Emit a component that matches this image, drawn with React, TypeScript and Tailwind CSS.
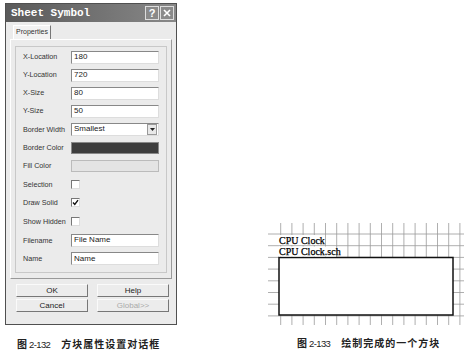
import React from "react";

const rows: { label: string; kind: "input" | "select" | "dark" | "light" | "check"; value?: string; checked?: boolean; h: number }[] = [
  { label: "X-Location", kind: "input", value: "180", h: 18 },
  { label: "Y-Location", kind: "input", value: "720", h: 18 },
  { label: "X-Size", kind: "input", value: "80", h: 18 },
  { label: "Y-Size", kind: "input", value: "50", h: 18 },
  { label: "Border Width", kind: "select", value: "Smallest", h: 18.5 },
  { label: "Border Color", kind: "dark", h: 18.5 },
  { label: "Fill Color", kind: "light", h: 18 },
  { label: "Selection", kind: "check", h: 18.5 },
  { label: "Draw Solid", kind: "check", checked: true, h: 18.5 },
  { label: "Show Hidden", kind: "check", h: 19 },
  { label: "Filename", kind: "input", value: "File Name", h: 18.5 },
  { label: "Name", kind: "input", value: "Name", h: 18.5 },
];

const Field = ({ row }: { row: (typeof rows)[number] }) => {
  if (row.kind === "check")
    return (
      <div className="w-[9px] h-[9px] bg-white border border-t-[#777] border-l-[#777] border-b-[#ddd] border-r-[#ddd] flex items-center justify-center">
        {row.checked && (
          <svg width="7" height="7" viewBox="0 0 7 7">
            <path d="M1 3.5 L2.8 5.5 L6 1.2" stroke="#111" strokeWidth="1.4" fill="none" />
          </svg>
        )}
      </div>
    );
  if (row.kind === "dark")
    return <div className="w-[88px] h-[12px] bg-[#3d3d3d] border border-[#888]" />;
  if (row.kind === "light")
    return <div className="w-[88px] h-[12px] bg-[#e4e4e4] border border-[#bbb]" />;
  return (
    <div className="w-[88px] h-[13px] bg-white border border-t-[#888] border-l-[#888] border-b-[#ddd] border-r-[#ddd] flex items-center justify-between">
      <span className="pl-[2px] text-[8px] leading-none text-[#222]">{row.value}</span>
      {row.kind === "select" && (
        <div className="w-[10px] h-[11px] bg-[#e8e8e8] border border-[#999] flex items-center justify-center mr-[1px]">
          <svg width="5" height="3" viewBox="0 0 5 3">
            <path d="M0 0 H5 L2.5 3 Z" fill="#222" />
          </svg>
        </div>
      )}
    </div>
  );
};

const Btn = ({ children, disabled }: { children: React.ReactNode; disabled?: boolean }) => (
  <div
    className={`w-[72px] h-[13px] flex items-center justify-center text-[8px] leading-none border border-t-[#fafafa] border-l-[#fafafa] border-b-[#777] border-r-[#777] bg-[#ececec] ${
      disabled ? "text-[#aaa]" : "text-[#222]"
    }`}
  >
    {children}
  </div>
);

const Dialog = () => (
  <div className="w-[172px] h-[322px] border border-[#505050] bg-[#ebebeb] flex flex-col font-['Liberation_Sans',sans-serif]">
    <div className="h-[18px] bg-gradient-to-r from-[#5a5a5a] to-[#888] flex items-center justify-between pl-[5px] pr-[2px]">
      <span className="font-['Liberation_Mono',monospace] font-bold text-[11px] text-white">
        Sheet Symbol
      </span>
      <div className="flex gap-[1px]">
        <div className="w-[14px] h-[14px] border border-[#ddd] bg-[#8a8a8a] text-white text-[11px] leading-none flex items-center justify-center font-bold">
          ?
        </div>
        <div className="w-[14px] h-[14px] border border-[#ddd] bg-[#8a8a8a] flex items-center justify-center">
          <svg width="8" height="8" viewBox="0 0 8 8">
            <path d="M1 1 L7 7 M7 1 L1 7" stroke="#fff" strokeWidth="1.6" />
          </svg>
        </div>
      </div>
    </div>
    <div className="flex-1 px-[4px] pt-[3px] flex flex-col">
      <div className="ml-[3px] w-[38px] h-[14px] bg-[#f2f2f2] border border-b-0 border-t-[#fff] border-l-[#fff] border-r-[#777] text-[7px] text-[#333] flex items-center justify-center">
        Properties
      </div>
      <div className="h-[240px] border border-t-[#fff] border-l-[#fff] border-b-[#999] border-r-[#999] px-[4px] pt-[6px]">
        <div className="h-[227px] border border-[#c8c8c8] pt-[1px] pl-[7px]">
          {rows.map((r) => (
            <div key={r.label} className="flex items-center" style={{ height: r.h }}>
              <span className="w-[48px] text-[7.2px] leading-none text-[#333]">{r.label}</span>
              <Field row={r} />
            </div>
          ))}
        </div>
      </div>
      <div className="mt-[5px] grid grid-cols-[72px_72px] gap-x-[9px] gap-y-[2px] pl-[6px]">
        <Btn>OK</Btn>
        <Btn>Help</Btn>
        <Btn>Cancel</Btn>
        <Btn disabled>Global&gt;&gt;</Btn>
      </div>
    </div>
  </div>
);

const xs = Array.from({ length: 17 }, (_, i) => 12.7 + 11.2 * i);
const ys = Array.from({ length: 8 }, (_, i) => 11 + 11.7 * i);

const SheetFigure = () => (
  <svg width="196" height="102" viewBox="0 0 196 102">
    {xs.map((x) => (
      <line key={"v" + x} x1={x} y1={0} x2={x} y2={102} stroke="#9a9a9a" strokeWidth="0.8" />
    ))}
    {ys.map((y) => (
      <line key={"h" + y} x1={0} y1={y} x2={196} y2={y} stroke="#9a9a9a" strokeWidth="0.8" />
    ))}
    <rect x="11" y="34.5" width="174" height="57.5" fill="#fff" stroke="#111" strokeWidth="1.5" />
    <rect x="11" y="12" width="42" height="10" fill="#fff" />
    <rect x="11" y="23.5" width="57" height="10" fill="#fff" />
    <text x="11" y="20.5" fontFamily="'Liberation Serif', serif" fontSize="10" fill="#000" stroke="#000" strokeWidth="0.25">
      CPU Clock
    </text>
    <text x="11" y="32" fontFamily="'Liberation Serif', serif" fontSize="10" fill="#000" stroke="#000" strokeWidth="0.25">
      CPU Clock.sch
    </text>
  </svg>
);

const Caption = ({ num, text }: { num: string; text: string }) => (
  <div className="flex items-baseline text-[#222] whitespace-pre leading-none">
    <span className="font-['Noto_Sans_CJK_SC',sans-serif] font-bold text-[10px]">图</span>
    <span className="ml-[2px] font-['Liberation_Sans',sans-serif] text-[9.5px] tracking-[-0.6px]">{num}</span>
    <span className="ml-[11px] font-['Noto_Sans_CJK_SC',sans-serif] font-bold text-[10px] tracking-[1px]">{text}</span>
  </div>
);

export default function App() {
  return (
    <div className="w-[473px] h-[353px] bg-white flex">
      <div className="w-[185px] pl-[5px] pt-[3px] flex flex-col">
        <Dialog />
        <div className="mt-[14px] ml-[12px]">
          <Caption num="2-132" text="方块属性设置对话框" />
        </div>
      </div>
      <div className="flex flex-col pl-[83px] pt-[223px]">
        <SheetFigure />
        <div className="mt-[13px] ml-[29px]">
          <Caption num="2-133" text="绘制完成的一个方块" />
        </div>
      </div>
    </div>
  );
}
